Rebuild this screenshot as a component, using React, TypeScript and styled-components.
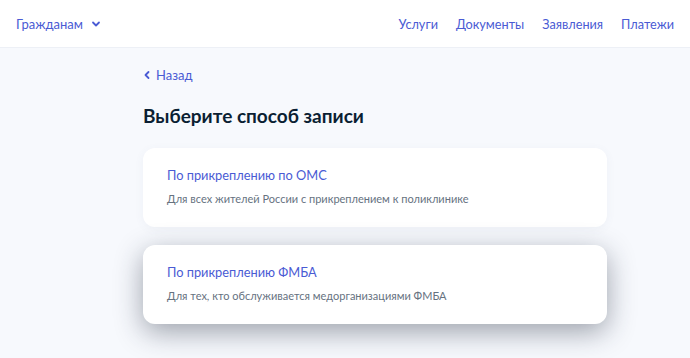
import * as React from "react";
import styled, { createGlobalStyle } from "styled-components";

const GlobalStyle = createGlobalStyle`
	html, body {
		margin: 0;
		padding: 0;
		background: #f7f9fd;
		font-family: Lato, "Noto Sans", sans-serif;
	}
`;

const Header = styled.header`
	height: 48px;
	box-sizing: border-box;
	padding: 0 16px;

	display: flex;
	align-items: center;
	justify-content: space-between;

	background: #fff;
	border-bottom: 1px solid #edf0f6;
`;

const Link = styled.a`
	display: flex;
	align-items: center;
	gap: 8px;

	color: #4a5bd4;
	font-size: 13px;
	line-height: 20px;
	text-decoration: none;
	cursor: pointer;
`;

const Nav = styled.nav`
	display: flex;
	gap: 18px;

	${Link} {
		font-size: 12.7px;
	}
`;

const Main = styled.main`
	width: 464px;
	margin-left: 143px;
	padding: 17px 0 40px;
`;

const Back = styled(Link)`
	gap: 5px;
`;

const Title = styled.h1`
	margin: 17px 0 18px;

	color: #0b1f33;
	font-size: 19px;
	line-height: 28px;
	font-weight: 700;
`;

const Cards = styled.div`
	display: flex;
	flex-direction: column;
	gap: 18px;
`;

const Card = styled.div<{ $hover?: boolean }>`
	padding: 17px 24px 18px;

	background: #fff;
	border-radius: 12px;
	box-shadow: ${(p) =>
		p.$hover
			? "0 8px 28px rgba(30, 40, 60, 0.42)"
			: "0 2px 10px rgba(80, 100, 140, 0.06)"};
	cursor: pointer;
`;

const CardTitle = styled.div`
	color: #4a5bd4;
	font-size: 12.8px;
	line-height: 20px;
`;

const CardText = styled.div`
	margin-top: 4px;

	color: #66727f;
	font-size: 11px;
	line-height: 20px;
`;

const Chevron = ({ dir }: { dir: "down" | "left" }) =>
	dir === "down" ? (
		<svg width="10" height="10" viewBox="0 0 10 10">
			<path d="M2 3.5 L5 6.5 L8 3.5" fill="none" stroke="#4a5bd4" strokeWidth="1.8" strokeLinecap="round" strokeLinejoin="round" />
		</svg>
	) : (
		<svg width="8" height="10" viewBox="0 0 8 10">
			<path d="M5.5 2 L2.5 5 L5.5 8" fill="none" stroke="#4a5bd4" strokeWidth="1.8" strokeLinecap="round" strokeLinejoin="round" />
		</svg>
	);

const options = [
	{ title: "По прикреплению по ОМС", text: "Для всех жителей России с прикреплением к поликлинике" },
	{ title: "По прикреплению ФМБА", text: "Для тех, кто обслуживается медорганизациями ФМБА", hover: true },
];

const App = (): JSX.Element => (
	<>
		<GlobalStyle />
		<Header>
			<Link>
				Гражданам
				<Chevron dir="down" />
			</Link>
			<Nav>
				<Link>Услуги</Link>
				<Link>Документы</Link>
				<Link>Заявления</Link>
				<Link>Платежи</Link>
			</Nav>
		</Header>
		<Main>
			<Back>
				<Chevron dir="left" />
				Назад
			</Back>
			<Title>Выберите способ записи</Title>
			<Cards>
				{options.map((o) => (
					<Card key={o.title} $hover={o.hover}>
						<CardTitle>{o.title}</CardTitle>
						<CardText>{o.text}</CardText>
					</Card>
				))}
			</Cards>
		</Main>
	</>
);

export default App;
